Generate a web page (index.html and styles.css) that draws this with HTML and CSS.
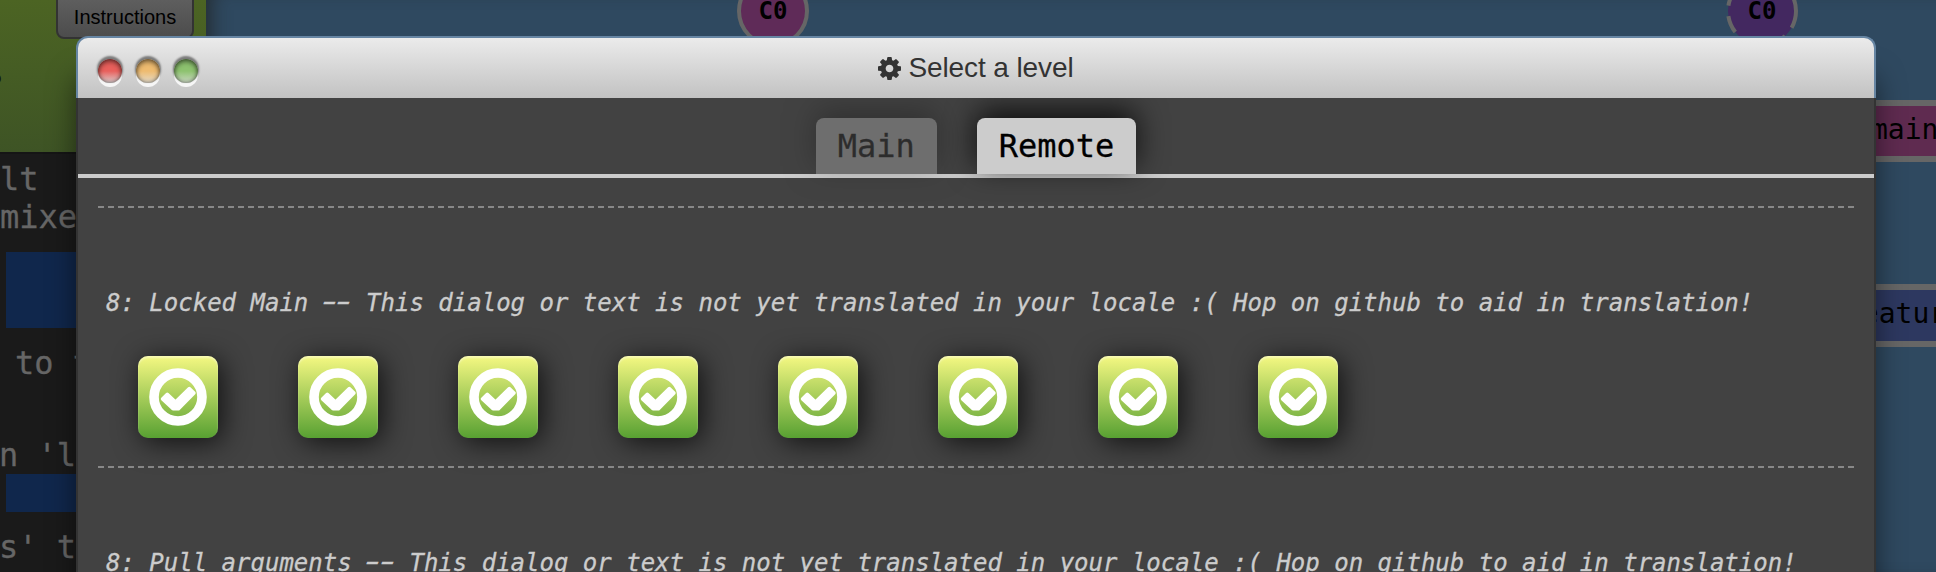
FILE: index.html
```
<!DOCTYPE html>
<html lang="en">
<head>
<meta charset="utf-8">
<title>Select a level</title>
<link rel="stylesheet" href="styles.css">
</head>
<body>
<svg class="defs" aria-hidden="true">
  <symbol id="check" viewBox="0 0 58 58">
    <circle cx="29" cy="29" r="24" fill="none" stroke="#fff" stroke-width="9.6"/>
    <path d="M13.5 31 L18.3 26.2 L26.5 34 L40.3 20.5 L45 25 L29.5 40.8 H24 Z" fill="#fff" stroke="#fff" stroke-width="3.4" stroke-linejoin="round"/>
  </symbol>
</svg>
<div class="app">
  <aside class="terminal">
    <div class="terminal-head"><span class="head-mark">?</span><button class="instructions">Instructions</button></div>
    <div class="terminal-body">
      <p class="line">lt</p>
      <p class="line">mixe</p>
      <div class="block tall"></div>
      <p class="line indent">to t</p>
      <p class="line late">n 'l</p>
      <div class="block short"></div>
      <p class="line last">s' t</p>
    </div>
  </aside>
  <main class="canvas">
    <div class="commit first"><svg viewBox="0 0 72 72"><circle cx="36" cy="36" r="34" fill="#5f2b58" stroke="#666" stroke-width="4"/></svg><span>C0</span></div>
    <div class="commit second"><svg viewBox="0 0 72 72"><circle cx="36" cy="36" r="34" fill="#432860" stroke="#666" stroke-width="4" stroke-dasharray="17.5 10.5"/></svg><span>C0</span></div>
    <div class="branch main-branch">main</div>
    <div class="branch feature-branch">feature</div>
  </main>
</div>
<section class="window">
  <header class="titlebar">
    <div class="lights"><i class="light red"></i><i class="light yellow"></i><i class="light green"></i></div>
    <h1 class="title"><svg class="gear" viewBox="0 128 1536 1536"><path fill="#333" d="M1024 896q0-106-75-181t-181-75-181 75-75 181 75 181 181 75 181-75 75-181zm512-109v222q0 12-8 23t-20 13l-185 28q-19 54-39 91 35 50 107 138 10 12 10 25t-9 23q-27 37-99 108t-94 71q-12 0-26-9l-138-108q-44 23-91 38-16 136-29 186-7 28-36 28h-222q-14 0-24.5-8.5t-11.5-21.5l-28-184q-49-16-90-37l-141 107q-10 9-25 9-14 0-25-11-126-114-165-168-7-10-7-23 0-12 8-23 15-21 51-66.5t54-70.5q-27-50-41-99l-183-27q-13-2-21-12.5t-8-23.5v-222q0-12 8-23t19-13l186-28q14-46 39-92-40-57-107-138-10-12-10-24 0-10 9-23 26-36 98.5-107.5t94.5-71.5q13 0 26 10l138 107q44-23 91-38 16-136 29-186 7-28 36-28h222q14 0 24.5 8.5t11.5 21.5l28 184q49 16 90 37l142-107q9-9 24-9 13 0 25 10 129 119 165 170 7 8 7 22 0 12-8 23-15 21-51 66.5t-54 70.5q26 50 41 98l183 28q13 2 21 12.5t8 23.5z"/></svg>Select a level</h1>
  </header>
  <nav class="tabs"><div class="tab">Main</div><div class="tab selected">Remote</div></nav>
  <div class="levels">
    <div class="series">
      <h2 class="series-name">8: Locked Main <span class="dash">-</span><span class="dash">-</span> This dialog or text is not yet translated in your locale :( Hop on github to aid in translation!</h2>
      <div class="icons">
        <div class="level"><svg><use href="#check"/></svg></div>
        <div class="level"><svg><use href="#check"/></svg></div>
        <div class="level"><svg><use href="#check"/></svg></div>
        <div class="level"><svg><use href="#check"/></svg></div>
        <div class="level"><svg><use href="#check"/></svg></div>
        <div class="level"><svg><use href="#check"/></svg></div>
        <div class="level"><svg><use href="#check"/></svg></div>
        <div class="level"><svg><use href="#check"/></svg></div>
      </div>
    </div>
    <div class="series">
      <h2 class="series-name">8: Pull arguments <span class="dash">-</span><span class="dash">-</span> This dialog or text is not yet translated in your locale :( Hop on github to aid in translation!</h2>
    </div>
  </div>
</section>
</body>
</html>
```
FILE: styles.css
```
* { box-sizing: border-box; }
html { height: 572px; overflow: hidden; }
body { margin: 0; width: 1936px; height: 572px; overflow: hidden; position: relative; font-family: "DejaVu Sans Mono", monospace; }
h1, h2, p { margin: 0; font-weight: normal; }
.defs { position: absolute; width: 0; height: 0; }

.app { display: flex; height: 572px; background: #2f4960; }
.terminal { width: 206px; flex: none; display: flex; flex-direction: column; position: relative; }
.terminal-head { height: 152px; flex: none; background: linear-gradient(#4c6423, #3e5425); position: relative; display: flex; align-items: flex-start; padding-left: 56px; }
.head-mark { position: absolute; left: -19px; top: 62px; font-size: 38px; font-weight: bold; line-height: 50px; color: #111; }
.instructions { width: 138px; height: 49px; margin-top: -10px; padding: 5px 0 0; border: 2px solid #333; border-radius: 8px; background: linear-gradient(#626262, #4c4c4c); font: 20px "Liberation Sans", Arial, sans-serif; color: #000; }
.terminal-body { flex: 1; background: #1a1a1a; color: #666; font-size: 32px; line-height: 38px; padding-top: 6px; border-top: 2px solid #151515; overflow: hidden; }
.line { white-space: nowrap; -webkit-text-stroke: .3px; }
.block { margin-left: 6px; background: #10274c; }
.tall { height: 76px; margin-top: 16px; }
.short { height: 38px; }
.indent { margin: 16px 0 0 15px; }
.late { margin: 54px 0 0 -1px; }
.last { margin: 16px 0 0 -1px; }

/* Commit tree: free-positioned nodes */
.canvas { flex: 1; position: relative; overflow: hidden; box-shadow: inset 18px 0 20px -14px rgba(35, 40, 42, .95); }
.commit { position: absolute; top: -25px; width: 72px; height: 72px; font-weight: bold; font-size: 24px; display: grid; place-items: center; }
.commit svg, .commit span { grid-area: 1 / 1; }
.commit svg { width: 72px; height: 72px; }
.commit span { line-height: 73px; height: 72px; }
.first { left: 531px; }
.second { left: 1520px; }
.branch { position: absolute; width: 160px; height: 62px; border: 6px solid #666; font-size: 28px; line-height: 47px; }
.main-branch { top: 100px; left: 1620px; background: #5f2b50; padding-left: 39px; }
.feature-branch { top: 284px; left: 1603px; height: 63px; background: #2d3860; padding-left: 30px; }

.window { position: absolute; left: 76px; top: 36px; width: 1800px; height: 536px; border-radius: 12px 12px 0 0; box-shadow: 0 40px 28px rgba(0, 0, 0, .5); display: flex; flex-direction: column; }
.titlebar { flex: none; position: relative; z-index: 2; height: 62px; border: 2px solid #6685a3; border-bottom: 0; border-radius: 12px 12px 0 0; background: linear-gradient(#ebebeb, #c2c2c2); display: grid; grid-template-columns: 1fr auto 1fr; align-items: center; }
.lights { display: flex; gap: 14px; padding: 5px 0 0 20px; }
.light { width: 24px; height: 24px; border-radius: 50%; box-shadow: inset 0 3px 5px rgba(0, 0, 0, .38), inset 0 0 4px rgba(0, 0, 0, .5), 0 -2px 2px 1px rgba(0, 0, 0, .45), 0 4px 0 #f6f6f6; }
.red { background: linear-gradient(#e8605c 0 50%, #dccfcf); }
.yellow { background: linear-gradient(#eebb70 0 50%, #e4dccc); }
.green { background: linear-gradient(#8dc26f 0 50%, #cdd9c6); }
.title { display: flex; align-items: center; gap: 7px; font: 28px/32px "Liberation Sans", Arial, sans-serif; letter-spacing: -.1px; color: #333; }
.gear { width: 23px; height: 23px; }
.tabs { flex: none; position: relative; z-index: 1; height: 80px; padding-top: 20px; border: solid #333; border-width: 0 2px; background: linear-gradient(#ccc, #ccc) 0 76px / 100% 4px no-repeat #424242; display: flex; justify-content: center; gap: 40px; }
.tab { height: 56px; padding: 0 22px; border-radius: 8px 8px 0 0; font-size: 32px; line-height: 57px; color: #000; background: #ccc; box-shadow: 0 -8px 30px rgba(0, 0, 0, .8); opacity: .32; -webkit-text-stroke: .3px; }
.tab.selected { opacity: 1; }
.levels { flex: 1; min-height: 0; overflow: hidden; background: #424242; border: solid #333; border-width: 0 2px; padding: 28px 20px 0; }
.series { height: 260px; background: repeating-linear-gradient(90deg, #888 0 6px, transparent 6px 10px) 0 0 / 100% 2px no-repeat; padding: 82px 8px 0; }
.series-name { font-size: 24px; line-height: 30px; font-style: italic; color: #ccc; white-space: nowrap; -webkit-text-stroke: .3px; }
.dash { display: inline-block; transform: translateY(-1px) scaleX(1.75); }
.icons { display: flex; gap: 80px; padding: 38px 0 0 32px; }
.level { width: 80px; height: 82px; border-radius: 10px; background: linear-gradient(#f5f882, #58a132); box-shadow: inset 0 2px 2px rgba(255, 255, 255, .4), 4px 4px 28px rgba(0, 0, 0, .75); display: flex; justify-content: center; align-items: center; }
.level svg { width: 58px; height: 58px; }
```
